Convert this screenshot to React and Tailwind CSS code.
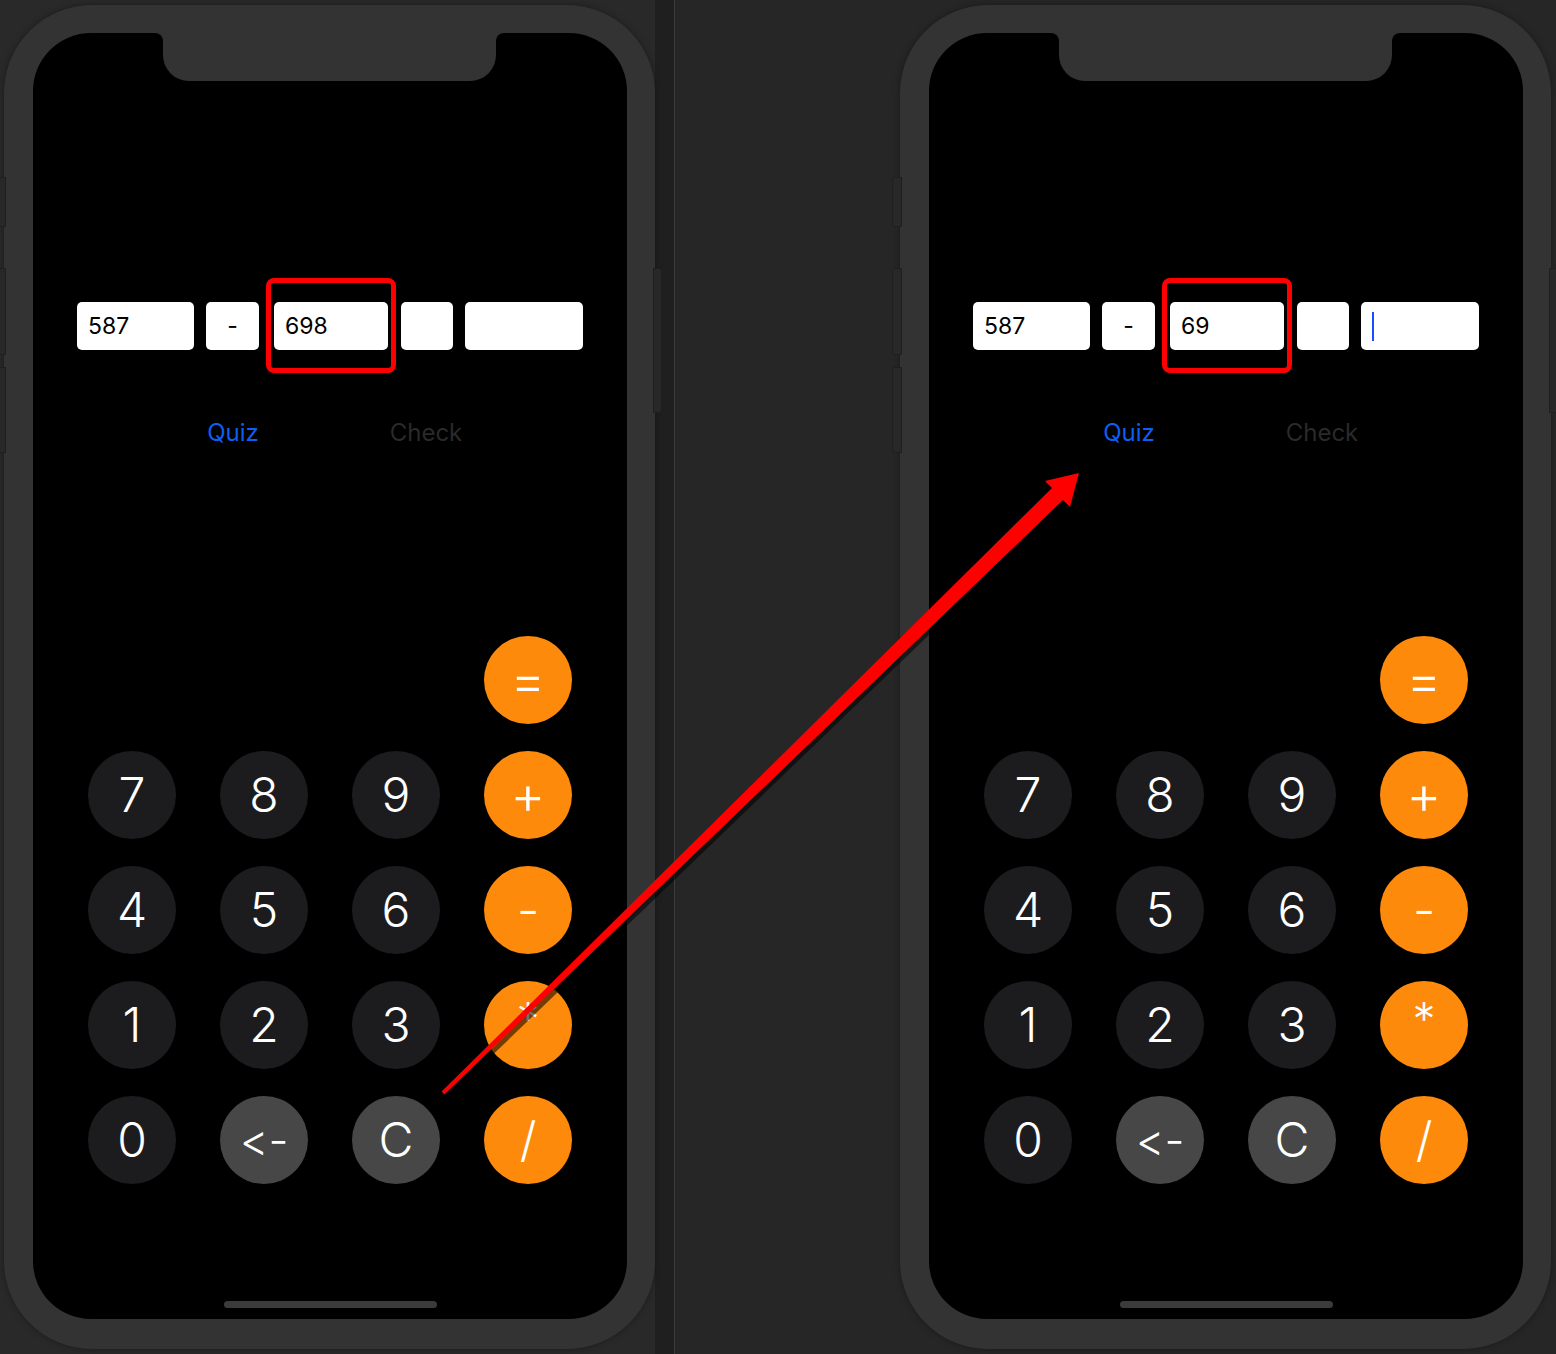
import React from "react";

const digitFont = { fontFamily: "Inter, 'Liberation Sans', sans-serif" };

function Key({ label, tone = "dark", size = "text-[48px]" }) {
  const tones = {
    dark: "bg-[#1c1c1e] text-white",
    gray: "bg-[#474747] text-white",
    orange: "bg-[#fe8a0c] text-white",
  };
  return (
    <div
      className={`w-[88px] h-[88px] rounded-full flex items-center justify-center font-[350] leading-none [font-variant-ligatures:none] [font-feature-settings:'calt'_0,'liga'_0] ${tones[tone]} ${size}`}
    >
      {label}
    </div>
  );
}

function Field({ w, children, center }) {
  return (
    <div
      className={`h-[48px] bg-white rounded-[5px] flex items-center text-[23px] text-black ${center ? "justify-center" : "pl-[11px]"}`}
      style={{ width: w }}
    >
      {children}
    </div>
  );
}

function Phone({ second, cursor }) {
  return (
    <div className="relative w-[651px] h-[1344px] rounded-[88px] bg-[#333333] pl-[29px] pr-[28px] pt-[28px] pb-[30px] shadow-[0_0_6px_rgba(0,0,0,0.35)]">
      {/* side buttons */}
      <div className="absolute left-[-8px] top-[172px] w-[10px] h-[50px] rounded-l-[3px] bg-[#282828] border border-[#1f1f1f]" />
      <div className="absolute left-[-8px] top-[263px] w-[10px] h-[87px] rounded-l-[3px] bg-[#282828] border border-[#1f1f1f]" />
      <div className="absolute left-[-8px] top-[362px] w-[10px] h-[86px] rounded-l-[3px] bg-[#282828] border border-[#1f1f1f]" />
      <div className="absolute right-[-7px] top-[263px] w-[9px] h-[145px] rounded-r-[3px] bg-[#282828] border border-[#1f1f1f]" />

      <div className="relative w-full h-full bg-black rounded-[58px] flex flex-col" style={digitFont}>
        {/* notch */}
        <div className="absolute left-[130px] top-0 w-[333px] h-[48px] bg-[#333333] rounded-b-[26px]">
          <div className="absolute left-[-8px] top-0 w-[8px] h-[8px] bg-[#333333]">
            <div className="w-full h-full bg-black rounded-tr-[8px]" />
          </div>
          <div className="absolute right-[-8px] top-0 w-[8px] h-[8px] bg-[#333333]">
            <div className="w-full h-full bg-black rounded-tl-[8px]" />
          </div>
        </div>

        {/* expression fields */}
        <div className="relative mt-[269px] ml-[44px] flex">
          <Field w={117}>587</Field>
          <div className="ml-[12px]">
            <Field w={53} center>
              -
            </Field>
          </div>
          <div className="ml-[15px]">
            <Field w={114}>{second}</Field>
          </div>
          <div className="ml-[13px]">
            <Field w={52} />
          </div>
          <div className="ml-[12px]">
            <Field w={118}>
              {cursor && <span className="w-[2px] h-[29px] bg-[#1c4cff]" />}
            </Field>
          </div>
          <div className="absolute left-[189px] top-[-24px] w-[130px] h-[95px] border-[5px] border-[#ff0000] rounded-[8px] shadow-[2px_2px_3px_rgba(0,0,0,0.6)]" />
        </div>

        {/* actions */}
        <div className="mt-[68px] ml-[150px] flex gap-[93px] text-[24px] leading-[30px]">
          <div className="w-[100px] text-center text-[#0c5ff4]">Quiz</div>
          <div className="w-[100px] text-center text-[#2a2a2a]">Check</div>
        </div>

        {/* keypad */}
        <div className="mt-[188px] ml-[55px] grid grid-cols-[repeat(4,88px)] gap-x-[44px] gap-y-[27px]">
          <div />
          <div />
          <div />
          <Key label="=" tone="orange" size="text-[54px]" />
          <Key label="7" />
          <Key label="8" />
          <Key label="9" />
          <Key label="+" tone="orange" size="text-[54px]" />
          <Key label="4" />
          <Key label="5" />
          <Key label="6" />
          <Key label="-" tone="orange" size="text-[50px]" />
          <Key label="1" />
          <Key label="2" />
          <Key label="3" />
          <Key label={<span className="-mt-[12px]">*</span>} tone="orange" size="text-[46px]" />
          <Key label="0" />
          <Key label="<-" tone="gray" size="text-[44px]" />
          <Key label="C" tone="gray" />
          <Key label="/" tone="orange" size="text-[48px]" />
        </div>

        {/* home indicator */}
        <div className="mt-auto mb-[11px] mx-auto w-[213px] h-[7px] rounded-full bg-[#3b3b3b]" />
      </div>
    </div>
  );
}

export default function App() {
  return (
    <div className="relative w-[1556px] h-[1354px] flex overflow-hidden bg-[#262626]">
      {/* left capture */}
      <div className="w-[674px] h-full flex bg-[#292929]">
        <div className="pl-[4px] pt-[5px]">
          <Phone second="698" />
        </div>
        <div className="flex-1 bg-[#1f1f1f]" />
      </div>
      <div className="w-px h-full bg-[#3d3d3d]" />

      {/* right capture */}
      <div className="flex-1 h-full pl-[225px] pt-[5px] bg-[#262626]">
        <Phone second="69" cursor />
      </div>

      {/* annotation arrow */}
      <svg className="absolute inset-0 pointer-events-none" width="1556" height="1354" viewBox="0 0 1556 1354">
        <polygon
          points="444.6,1095.6 1055,491 1048,484 1082,476 1073,510 1066,503 447.4,1098.4"
          fill="rgba(0,0,0,0.55)"
        />
        <polygon
          points="441.6,1091.6 1052,488 1045,481 1079,473 1070,507 1063,500 444.4,1094.4"
          fill="#ff0000"
        />
      </svg>
    </div>
  );
}
